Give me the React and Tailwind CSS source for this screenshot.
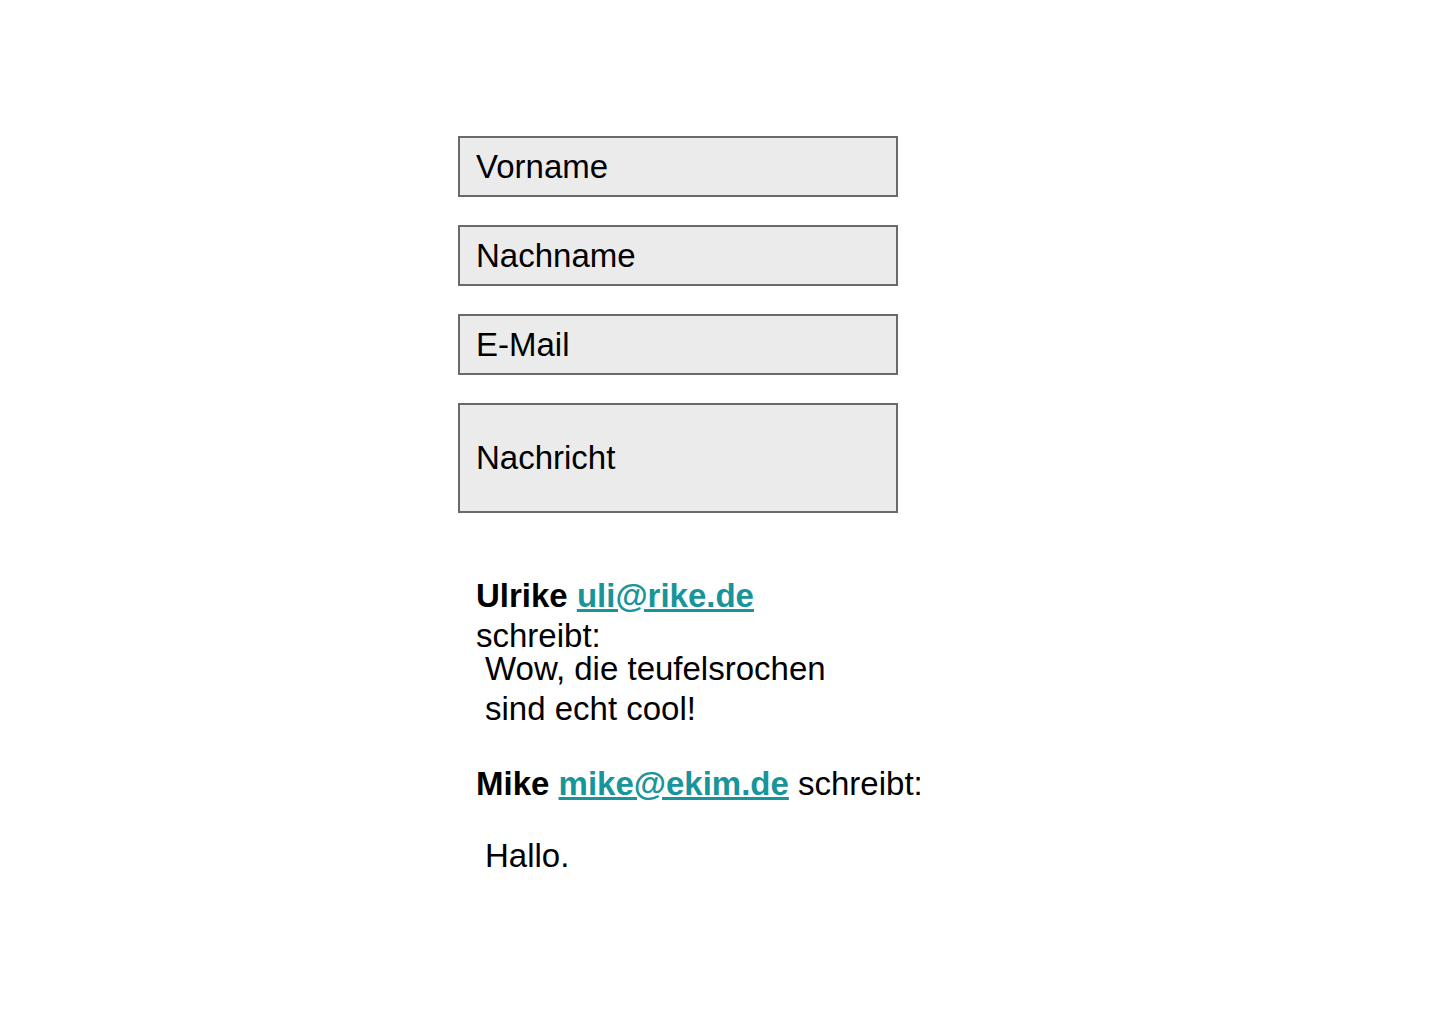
export default function App() {
  const font = { fontFamily: '"Liberation Sans", Arial, sans-serif' };
  return (
    <div className="w-[1440px] h-[1024px] bg-white text-black" style={font}>
      <div className="ml-[458px] pt-[136px] w-[440px] flex flex-col">
        <div className="h-[61px] border-2 border-[#6a6a6a] bg-[#ebebeb] flex items-center pl-[16px] text-[33px]">Vorname</div>
        <div className="mt-[28px] h-[61px] border-2 border-[#6a6a6a] bg-[#ebebeb] flex items-center pl-[16px] text-[33px]">Nachname</div>
        <div className="mt-[28px] h-[61px] border-2 border-[#6a6a6a] bg-[#ebebeb] flex items-center pl-[16px] text-[33px]">E-Mail</div>
        <div className="mt-[28px] h-[110px] border-2 border-[#6a6a6a] bg-[#ebebeb] flex items-center pl-[16px] text-[33px]">Nachricht</div>
      </div>
      <div className="ml-[476px] mt-[66px] text-[33px] leading-[33px]">
        <div>
          <span className="font-bold">Ulrike</span>{" "}
          <a className="font-bold text-[#17959a] underline">uli@rike.de</a>
        </div>
        <div className="mt-[7px]">schreibt:</div>
        <div className="ml-[9px]">
          <div>Wow, die teufelsrochen</div>
          <div className="mt-[7px]">sind echt cool!</div>
        </div>
        <div className="mt-[42px]">
          <span className="font-bold">Mike</span>{" "}
          <a className="font-bold text-[#17959a] underline">mike@ekim.de</a> schreibt:
        </div>
        <div className="mt-[39px] ml-[9px]">Hallo.</div>
      </div>
    </div>
  );
}
